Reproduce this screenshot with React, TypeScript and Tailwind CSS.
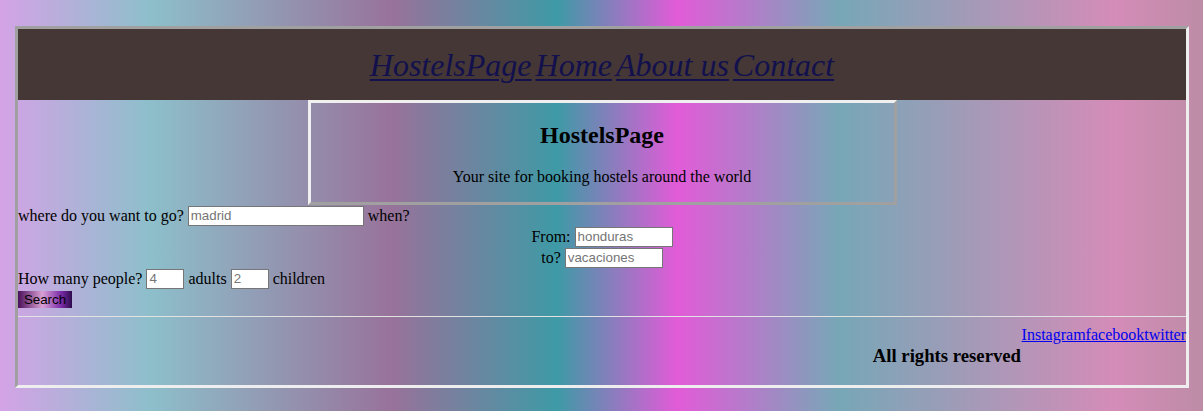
export default function App() {
  const input =
    "h-[20px] box-border border border-[#767676] bg-white px-[2px] font-['Liberation_Sans',sans-serif] text-[13.33px] text-black placeholder:text-[#757575] outline-none"

  return (
    <div
      className="min-h-[411px] w-full pt-[26px] pl-[15px] pr-[14px] pb-[23px] font-['Liberation_Serif',serif] text-[16px] text-black"
      style={{
        background:
          "linear-gradient(to right, #d4a3e6 0%, #8dbfcb 12.5%, #98729a 32.6%, #3e9aa6 46.3%, #e25bd8 56.3%, #77a7b7 69.7%, #d48cb8 92.7%, #bd8ca6 100%)",
      }}
    >
      {/* main frame */}
      <div className="box-border h-[362px] border-[3px] border-t-[#a0a0a0] border-l-[#a0a0a0] border-r-[#eeeeee] border-b-[#eeeeee] flex flex-col">
        {/* nav */}
        <nav className="h-[71px] bg-[#443736] flex items-center justify-center gap-[4px] text-[32px] italic leading-[36px]">
          {["HostelsPage", "Home", "About us", "Contact"].map((l) => (
            <a key={l} href="#" className="text-[#12104d] underline decoration-2 underline-offset-[3px]">
              {l}
            </a>
          ))}
        </nav>

        {/* hero */}
        <div className="flex justify-center">
          <div className="box-border w-[589px] h-[105px] border-[3px] border-t-[#f0f0f0] border-l-[#f0f0f0] border-r-[#a0a0a0] border-b-[#a0a0a0] flex flex-col items-center">
            <h1 className="mt-[19px] text-[24px] font-bold leading-[27px]">HostelsPage</h1>
            <p className="mt-[19px] leading-[18px]">Your site for booking hostels around the world</p>
          </div>
        </div>

        {/* search form */}
        <div className="flex flex-col">
          <div className="h-[21px] flex items-center gap-[4px]">
            <span>where do you want to go?</span>
            <input className={`${input} w-[176px]`} placeholder="madrid" />
            <span>when?</span>
          </div>
          <div className="h-[21px] flex items-center justify-center gap-[4px]">
            <span>From:</span>
            <input className={`${input} w-[98px]`} placeholder="honduras" />
          </div>
          <div className="h-[21px] flex items-center justify-center gap-[4px]">
            <span>to?</span>
            <input className={`${input} w-[98px]`} placeholder="vacaciones" />
          </div>
          <div className="h-[21px] flex items-center gap-[4px]">
            <span>How many people?</span>
            <input className={`${input} w-[38px]`} placeholder="4" />
            <span>adults</span>
            <input className={`${input} w-[38px]`} placeholder="2" />
            <span>children</span>
          </div>
          <div className="mt-[2px] flex h-[17px]">
            <button className="h-[17px] w-[54px] font-['Liberation_Sans',sans-serif] text-[13.33px] leading-[17px] text-black bg-[linear-gradient(to_right,#4a0f5a,#d9a0d4_45%,#7a2aa8_80%,#2e0a4c)]">
              Search
            </button>
          </div>
        </div>

        <div className="mt-[8px] h-[1px] bg-[#e2e2e2]" />

        {/* footer */}
        <footer className="flex flex-col items-end">
          <div className="mt-[9px] leading-[18px]">
            <a href="#" className="text-[#0000ee] underline">Instagram</a>
            <a href="#" className="text-[#0000ee] underline">facebook</a>
            <a href="#" className="text-[#0000ee] underline">twitter</a>
          </div>
          <h3 className="mt-[1px] mr-[165px] text-[18.72px] font-bold leading-[21px]">All rights reserved</h3>
        </footer>
      </div>
    </div>
  )
}
